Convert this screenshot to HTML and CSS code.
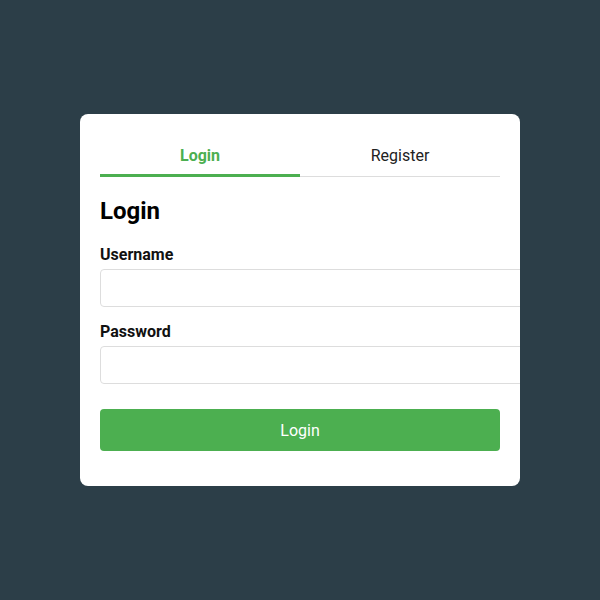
FILE: index.html
```html
<!DOCTYPE html>
<html lang="en">
<head>
<meta charset="utf-8">
<title>Login</title>
<link rel="stylesheet" href="styles.css">
</head>
<body>
<div class="card">
  <div class="tabs">
    <button class="tab active">Login</button>
    <button class="tab">Register</button>
  </div>
  <form class="form">
    <h2 class="title">Login</h2>
    <label class="label" for="u">Username</label>
    <input class="input" id="u" type="text">
    <label class="label" for="p">Password</label>
    <input class="input" id="p" type="password">
    <button class="submit" type="button">Login</button>
  </form>
</div>
</body>
</html>
```
FILE: styles.css
```css
html, body {
  margin: 0;
  padding: 0;
}
body {
  background: #2c3e48;
  font-family: Roboto, "Liberation Sans", sans-serif;
  min-height: 100vh;
  display: flex;
  align-items: center;
  justify-content: center;
}
.card {
  width: 400px;
  padding: 20px;
  background: #fff;
  border-radius: 8px;
  overflow: hidden;
}
.tabs {
  display: flex;
  box-shadow: inset 0 -1px 0 #dddddd;
}
.tab {
  flex: 1;
  background: none;
  border: none;
  border-bottom: 3px solid transparent;
  padding: 12px 0 9px;
  font-family: inherit;
  font-size: 16px;
  line-height: 19px;
  color: #222;
  cursor: pointer;
}
.tab.active {
  color: #4caf50;
  font-weight: bold;
  border-bottom-color: #4caf50;
}
.form {
  margin-bottom: 15px;
}
.title {
  margin: 20px 0;
  font-size: 24px;
  line-height: 28px;
  font-weight: bold;
  color: #000;
}
.label {
  display: block;
  font-size: 16px;
  line-height: 19px;
  font-weight: bold;
  color: #111;
  margin-bottom: 5px;
}
.input {
  display: block;
  height: 38px;
  padding: 0 12px;
  border: 1px solid #dddddd;
  border-radius: 4px;
  font-family: inherit;
  font-size: 16px;
  margin: 0 0 15px;
  box-sizing: border-box;
  width: calc(100% + 26px);
}
.submit {
  display: block;
  width: 100%;
  height: 42px;
  margin-top: 25px;
  background: #4caf50;
  color: #fff;
  border: none;
  border-radius: 4px;
  font-family: inherit;
  font-size: 16px;
  cursor: pointer;
}
```
